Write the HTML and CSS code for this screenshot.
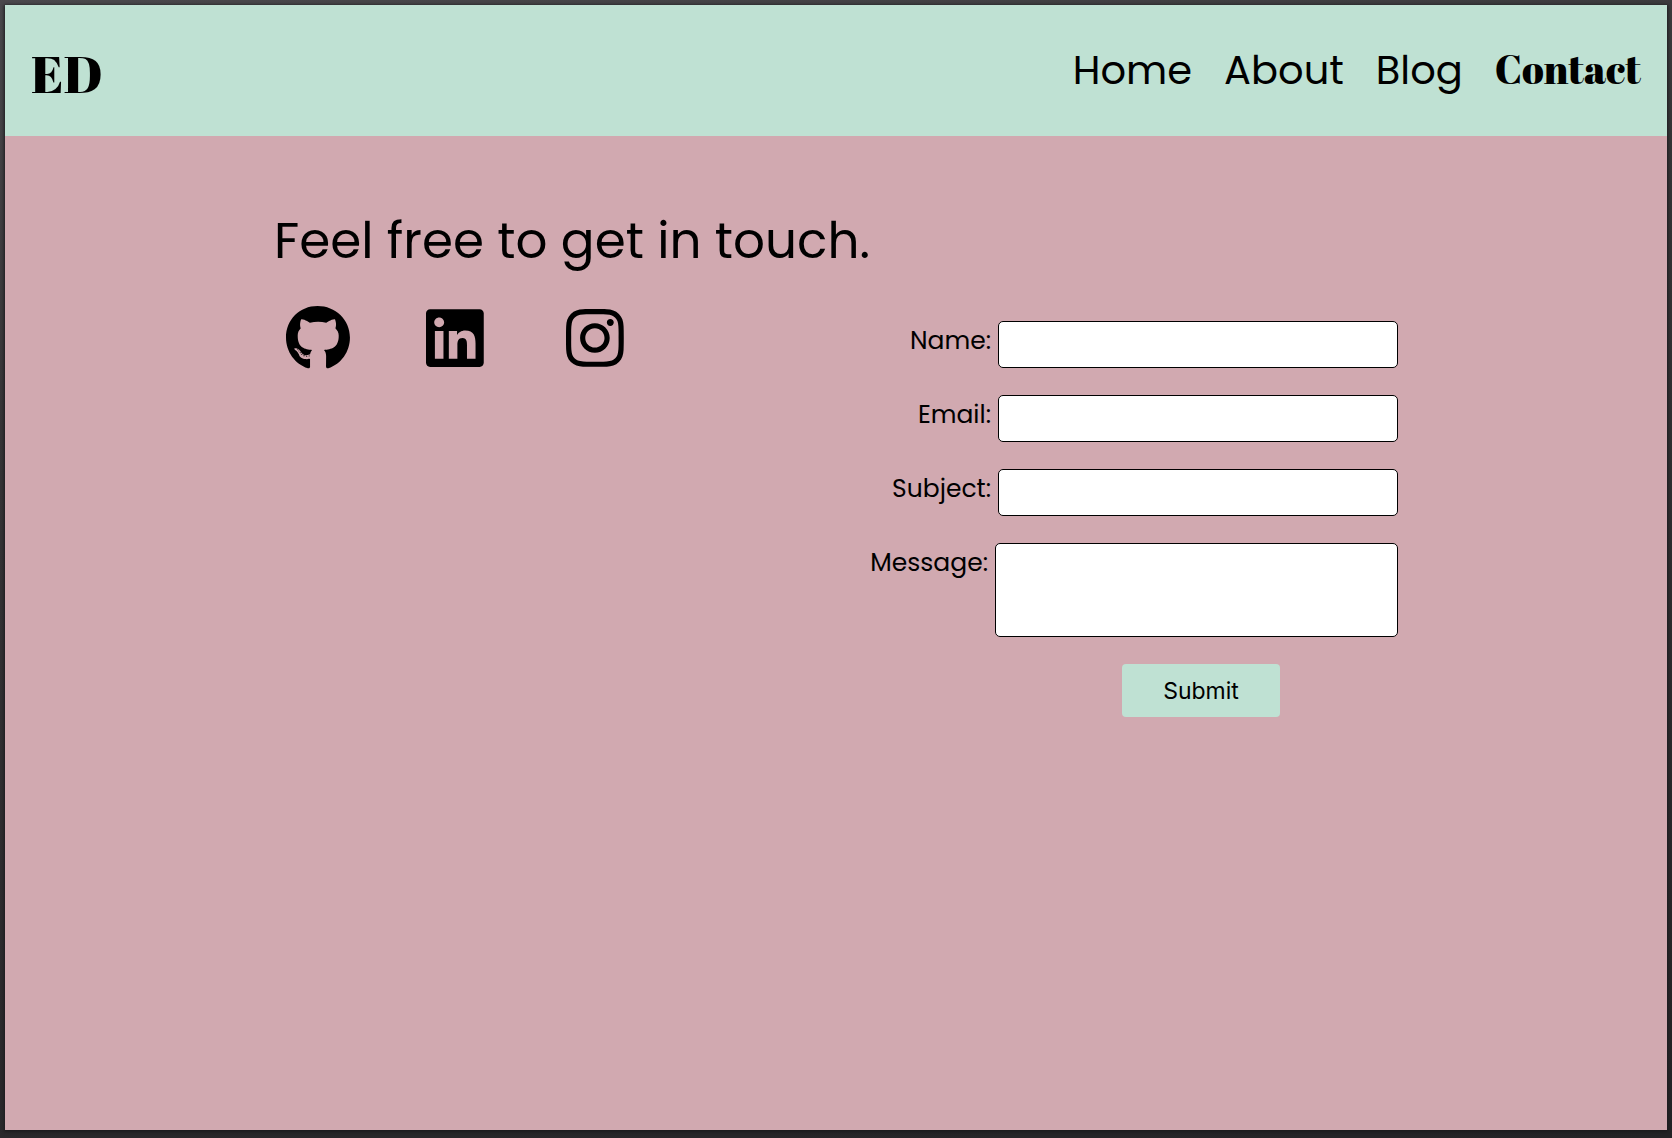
FILE: index.html
```html
<!DOCTYPE html>
<html lang="en">
<head>
  <meta charset="utf-8">
  <meta name="viewport" content="width=device-width, initial-scale=1">
  <title>ED | Contact</title>
  <link rel="stylesheet" href="styles.css">
</head>
<body>
  <div class="page">
    <header class="header">
      <a class="logo" href="#">ED</a>
      <nav class="nav">
        <a href="#">Home</a>
        <a href="#">About</a>
        <a href="#">Blog</a>
        <a class="current" href="#" aria-current="page">Contact</a>
      </nav>
    </header>
    <main class="contact">
      <h1 class="title">Feel free to get in touch.</h1>
      <div class="columns">
        <div class="social">
          <a href="#" aria-label="GitHub">
            <svg class="icon" viewBox="0 0 496 512" aria-hidden="true"><path d="M165.900 397.400c0 2-2.300 3.600-5.200 3.600-3.300.3-5.600-1.300-5.600-3.600 0-2 2.300-3.600 5.200-3.600 3-.3 5.600 1.300 5.600 3.600zm-31.100-4.500c-.7 2 1.300 4.300 4.300 4.900 2.600 1 5.600 0 6.200-2s-1.300-4.300-4.300-5.200c-2.600-.7-5.500.3-6.200 2.300zm44.200-1.700c-2.900.7-4.900 2.600-4.600 4.900.3 2 2.900 3.300 5.900 2.600 2.900-.7 4.900-2.600 4.600-4.600-.3-1.900-3-3.200-5.900-2.900zM244.800 8C106.100 8 0 113.300 0 252c0 110.900 69.800 205.800 169.500 239.200 12.800 2.300 17.300-5.600 17.300-12.100 0-6.200-.3-40.400-.3-61.400 0 0-70 15-84.700-29.800 0 0-11.400-29.100-27.800-36.600 0 0-22.900-15.700 1.600-15.400 0 0 24.900 2 38.600 25.800 21.900 38.600 58.600 27.500 72.900 20.900 2.300-16 8.800-27.100 16-33.700-55.900-6.200-112.300-14.300-112.300-110.500 0-27.500 7.600-41.300 23.600-58.900-2.600-6.500-11.100-33.300 2.600-67.900 20.900-6.500 69 27 69 27 20-5.600 41.500-8.500 62.800-8.500s42.800 2.900 62.800 8.500c0 0 48.100-33.600 69-27 13.700 34.700 5.200 61.400 2.600 67.900 16 17.700 25.800 31.500 25.800 58.900 0 96.500-58.900 104.200-114.800 110.500 9.200 7.900 17 22.900 17 46.400 0 33.700-.3 75.400-.3 83.600 0 6.500 4.600 14.400 17.300 12.100C428.200 457.800 496 362.900 496 252 496 113.300 383.500 8 244.800 8zM97.200 352.900c-1.300 1-1 3.300.7 5.200 1.600 1.600 3.900 2.300 5.200 1 1.300-1 1-3.300-.7-5.200-1.600-1.600-3.900-2.300-5.200-1zm-10.800-8.100c-.7 1.300.3 2.900 2.300 3.900 1.600 1 3.600.7 4.300-.7.7-1.300-.3-2.900-2.300-3.900-2-.6-3.600-.3-4.300.7zm32.400 35.600c-1.600 1.300-1 4.300 1.300 6.200 2.300 2.300 5.200 2.600 6.500 1 1.300-1.300.7-4.300-1.300-6.200-2.200-2.300-5.200-2.600-6.500-1zm-11.400-14.700c-1.600 1-1.600 3.600 0 5.900 1.600 2.300 4.300 3.300 5.600 2.300 1.600-1.300 1.600-3.900 0-6.200-1.400-2.300-4-3.300-5.600-2z"/></svg>
          </a>
          <a href="#" aria-label="LinkedIn">
            <svg class="icon" viewBox="0 0 448 512" aria-hidden="true"><path d="M416 32H31.900C14.300 32 0 46.500 0 64.300v383.400C0 465.500 14.300 480 31.900 480H416c17.600 0 32-14.500 32-32.300V64.300c0-17.800-14.400-32.300-32-32.300zM135.400 416H69V202.200h66.500V416zm-33.200-243c-21.300 0-38.500-17.300-38.500-38.500S80.900 96 102.200 96c21.200 0 38.500 17.300 38.500 38.500 0 21.300-17.200 38.500-38.500 38.500zm282.100 243h-66.400V312c0-24.800-.5-56.700-34.500-56.700-34.600 0-39.900 27-39.900 54.900V416h-66.400V202.200h63.700v29.200h.9c8.900-16.800 30.600-34.500 62.900-34.500 67.200 0 79.700 44.300 79.700 101.900V416z"/></svg>
          </a>
          <a href="#" aria-label="Instagram">
            <svg class="icon" viewBox="0 0 448 512" aria-hidden="true"><path d="M224.100 141c-63.600 0-114.900 51.300-114.900 114.900s51.300 114.900 114.900 114.900S339 319.500 339 255.900 287.700 141 224.100 141zm0 189.600c-41.100 0-74.700-33.500-74.700-74.700s33.500-74.700 74.700-74.700 74.700 33.500 74.700 74.700-33.600 74.700-74.700 74.700zm146.400-194.300c0 14.900-12 26.800-26.800 26.800-14.900 0-26.800-12-26.800-26.800s12-26.800 26.800-26.800 26.800 12 26.800 26.800zm76.100 27.200c-1.700-35.900-9.900-67.700-36.200-93.900-26.200-26.200-58-34.400-93.900-36.200-37-2.100-147.900-2.100-184.900 0-35.800 1.700-67.600 9.900-93.900 36.100s-34.400 58-36.200 93.900c-2.100 37-2.100 147.900 0 184.900 1.700 35.900 9.900 67.700 36.200 93.900s58 34.400 93.900 36.200c37 2.100 147.900 2.100 184.900 0 35.900-1.700 67.700-9.900 93.900-36.200 26.200-26.200 34.400-58 36.200-93.900 2.100-37 2.100-147.800 0-184.800zM398.800 388c-7.800 19.600-22.900 34.700-42.600 42.600-29.500 11.700-99.500 9-132.100 9s-102.700 2.600-132.100-9c-19.600-7.800-34.700-22.900-42.600-42.600-11.700-29.500-9-99.500-9-132.100s-2.600-102.700 9-132.100c7.800-19.600 22.900-34.700 42.600-42.600 29.500-11.700 99.500-9 132.100-9s102.700-2.600 132.100 9c19.600 7.800 34.700 22.900 42.600 42.600 11.700 29.500 9 99.500 9 132.100s2.700 102.700-9 132.100z"/></svg>
          </a>
        </div>
        <form class="form">
          <div class="row">
            <label for="name">Name:</label>
            <input class="field" id="name" name="name" type="text">
          </div>
          <div class="row">
            <label for="email">Email:</label>
            <input class="field" id="email" name="email" type="email">
          </div>
          <div class="row">
            <label for="subject">Subject:</label>
            <input class="field" id="subject" name="subject" type="text">
          </div>
          <div class="row">
            <label for="message">Message:</label>
            <textarea class="field message" id="message" name="message"></textarea>
          </div>
          <button class="submit" type="submit">Submit</button>
        </form>
      </div>
    </main>
  </div>
</body>
</html>
```
FILE: styles.css
```css
* {
  box-sizing: border-box;
}

body {
  margin: 0;
  min-height: 100vh;
  padding: 5px 5px 8px;
  display: flex;
  background: linear-gradient(170deg, #4a484c, #363537 30%, #242326);
  color: #000;
  font-family: Poppins, Inter, sans-serif;
}

a {
  color: inherit;
  text-decoration: none;
}

.page {
  flex: 1;
  background: #d1a9b0;
  box-shadow: 0 1px 3px 1px #1c1b1d;
}

.header {
  display: flex;
  justify-content: space-between;
  align-items: center;
  min-height: 131px;
  padding: 0 26px 2px;
  background: #bfe1d3;
}

.logo,
.current {
  font-family: "Abril Fatface", "Liberation Serif", serif;
  font-weight: 400;
}

.logo {
  font-size: 52px;
  line-height: 60px;
  padding-top: 6px;
}

.nav {
  display: flex;
  align-items: baseline;
  gap: 32px;
  font-size: 40px;
  line-height: 60px;
}

.contact {
  max-width: 1124px;
  margin: 0 auto;
  padding-top: 65px;
}

.title {
  margin: 0;
  font-size: 50px;
  font-weight: 400;
  line-height: 80px;
}

.columns {
  display: flex;
  justify-content: space-between;
  padding-top: 24px;
}

.social {
  display: grid;
  grid-template-columns: repeat(3, 64px);
  gap: 76px;
  align-self: flex-start;
  padding-left: 12px;
}

.icon {
  display: block;
  height: 66px;
}

.form {
  display: flex;
  flex-direction: column;
  align-items: flex-end;
  gap: 27px;
  padding-top: 16px;
}

.row {
  display: flex;
  gap: 7px;
}

.row label {
  font-size: 25px;
  line-height: 39px;
}

.field {
  width: 400px;
  height: 47px;
  padding: 8px;
  border: 1px solid #000;
  border-radius: 5px;
  background: #fff;
  font: inherit;
  font-size: 24px;
}

.message {
  width: 403px;
  height: 94px;
  resize: none;
}

.submit {
  width: 158px;
  height: 53px;
  margin-right: 118px;
  border: 0;
  border-radius: 4px;
  background: #bfe1d3;
  color: #000;
  font-family: Inter, sans-serif;
  font-size: 23px;
}
```
